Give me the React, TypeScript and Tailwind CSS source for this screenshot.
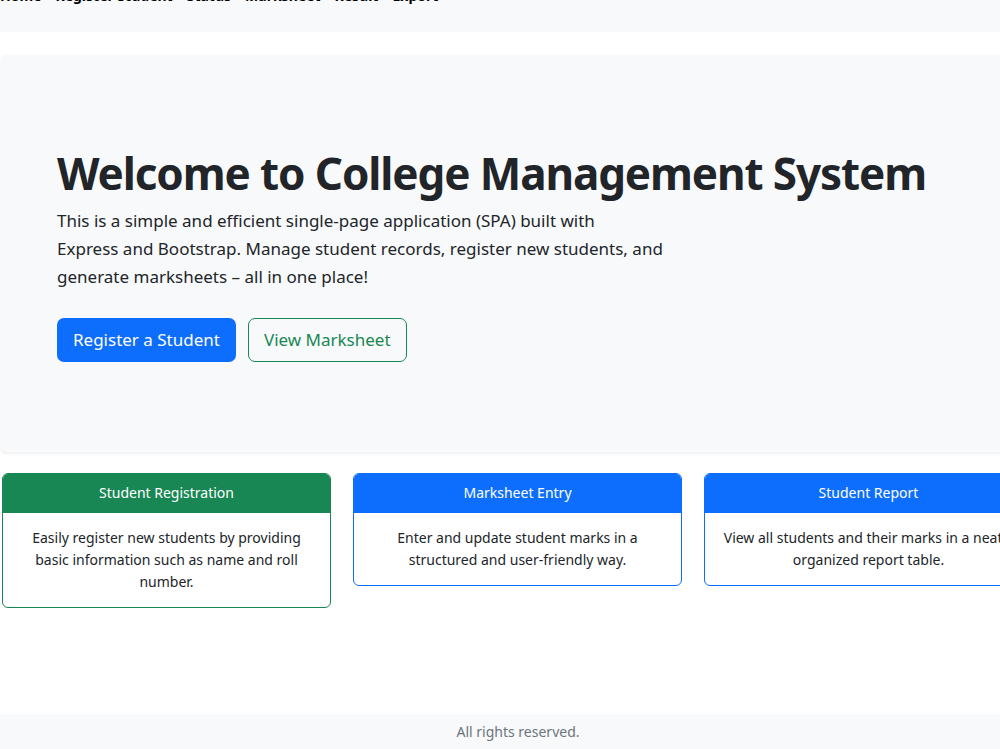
import React from 'react'

const navLinks = ['Home', 'Register Student', 'Status', 'Marksheet', 'Result', 'Export']

const features = [
  {
    title: 'Student Registration',
    text: 'Easily register new students by providing basic information such as name and roll number.',
    head: 'bg-[#198754]',
    border: 'border-[#198754]',
  },
  {
    title: 'Marksheet Entry',
    text: 'Enter and update student marks in a structured and user-friendly way.',
    head: 'bg-[#0d6efd]',
    border: 'border-[#0d6efd]',
  },
  {
    title: 'Student Report',
    text: 'View all students and their marks in a neatly organized report table.',
    head: 'bg-[#0d6efd]',
    border: 'border-[#0d6efd]',
  },
]

export default function App() {
  return (
    <div className="h-[749px] w-[1000px] overflow-hidden bg-white font-['Noto_Sans',sans-serif] text-[#212529]">
      <div className="w-[1036px]">
        {/* nav, scrolled mostly out of view */}
        <nav className="flex h-[32px] items-start bg-[#f8f9fa]">
          <ul className="-mt-[13px] flex gap-[14px] text-[14px] font-bold leading-[18px] text-black">
            {navLinks.map(link => (
              <li key={link}>{link}</li>
            ))}
          </ul>
        </nav>

        {/* hero */}
        <section className="mt-[23px] h-[397px] rounded-md bg-[#f8f9fa] pl-[57px] pt-[92px] shadow-[0_2px_3px_rgba(0,0,0,0.06)]">
          <h1 className="text-[44px] font-bold leading-[52px] tracking-[-1.1px]">
            Welcome to College Management System
          </h1>
          <p className="mt-[8px] w-[640px] text-[17px] leading-[28px]">
            This is a simple and efficient single-page application (SPA) built with
            <br />
            Express and Bootstrap. Manage student records, register new students, and generate
            marksheets – all in one place!
          </p>
          <div className="mt-[27px] flex gap-[12px]">
            <button className="h-[44px] rounded-[7px] bg-[#0d6efd] px-[16px] text-[17px] text-white">
              Register a Student
            </button>
            <button className="h-[44px] rounded-[7px] border border-[#198754] px-[15px] text-[17px] text-[#198754]">
              View Marksheet
            </button>
          </div>
        </section>

        {/* feature cards */}
        <div className="mt-[21px] flex items-start gap-[22px] pl-[2px]">
          {features.map(f => (
            <div
              key={f.title}
              className={`w-[329px] overflow-hidden rounded-[6px] border ${f.border} bg-white text-center`}
            >
              <div className={`${f.head} py-[9px] text-[14px] leading-[20px] text-white`}>{f.title}</div>
              <p className={`border-t ${f.border} px-[14px] pb-[14px] pt-[14px] text-[14px] leading-[22px]`}>
                {f.text}
              </p>
            </div>
          ))}
        </div>

        <footer className="mt-[106px] h-[36px] bg-[#f8f9fa] text-center text-[14px] leading-[36px] text-[#6c757d]">
          All rights reserved.
        </footer>
      </div>
    </div>
  )
}
